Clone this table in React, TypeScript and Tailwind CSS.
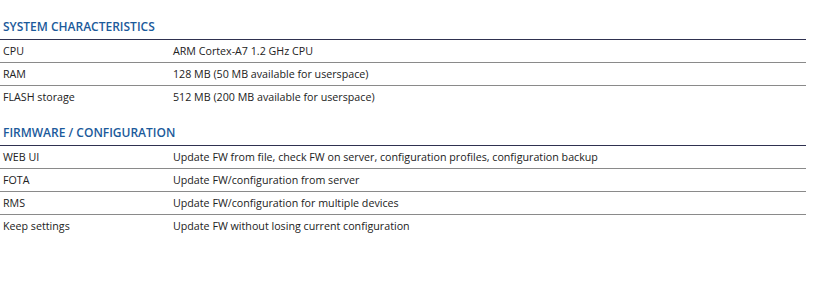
import React from "react";

const sections = [
  {
    title: "SYSTEM CHARACTERISTICS",
    rows: [
      ["CPU", "ARM Cortex-A7 1.2 GHz CPU"],
      ["RAM", "128 MB (50 MB available for userspace)"],
      ["FLASH storage", "512 MB (200 MB available for userspace)"],
    ],
  },
  {
    title: "FIRMWARE / CONFIGURATION",
    rows: [
      ["WEB UI", "Update FW from file, check FW on server, configuration profiles, configuration backup"],
      ["FOTA", "Update FW/configuration from server"],
      ["RMS", "Update FW/configuration for multiple devices"],
      ["Keep settings", "Update FW without losing current configuration"],
    ],
  },
];

export default function App() {
  return (
    <div className="w-[830px] h-[286px] bg-white pt-[19px] flex flex-col gap-[16px]" style={{ fontFamily: '"Open Sans", sans-serif' }}>
      {sections.map((s) => (
        <div key={s.title} className="w-[806px]">
          <div className="pl-[3px] text-[12px] font-semibold leading-[16px] pb-[4px] text-[#1b5a9b] border-b border-[#2f3150]">
            {s.title}
          </div>
          {s.rows.map((r, i) => (
            <div
              key={r[0]}
              className={`flex h-[23px] text-[10.7px] leading-[22px] text-[#222222] ${i < s.rows.length - 1 ? "border-b border-[#8a8a8a]" : ""}`}
            >
              <div className="w-[173px] pl-[3px] shrink-0">{r[0]}</div>
              <div>{r[1]}</div>
            </div>
          ))}
        </div>
      ))}
    </div>
  );
}
